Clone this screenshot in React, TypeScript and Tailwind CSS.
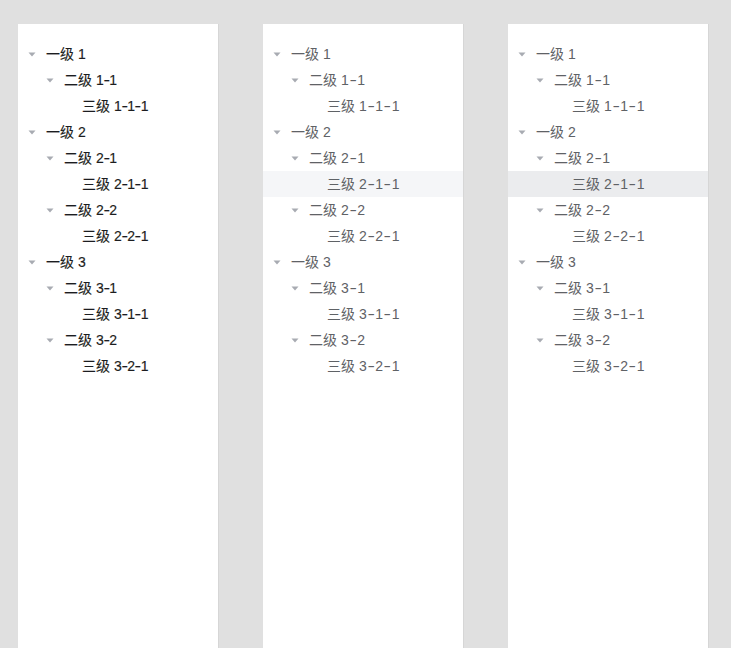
import React from 'react';

interface TreeNode {
  label: string;
  children?: TreeNode[];
}

const TREE: TreeNode[] = [
  {
    label: '一级 1',
    children: [{ label: '二级 1-1', children: [{ label: '三级 1-1-1' }] }],
  },
  {
    label: '一级 2',
    children: [
      { label: '二级 2-1', children: [{ label: '三级 2-1-1' }] },
      { label: '二级 2-2', children: [{ label: '三级 2-2-1' }] },
    ],
  },
  {
    label: '一级 3',
    children: [
      { label: '二级 3-1', children: [{ label: '三级 3-1-1' }] },
      { label: '二级 3-2', children: [{ label: '三级 3-2-1' }] },
    ],
  },
];

const INDENT = ['pl-0', 'pl-[18px]', 'pl-[36px]'];

function Caret() {
  return (
    <svg width="8" height="5" viewBox="0 0 8 5" className="block">
      <path d="M0.5 0.5 H7.5 L4 4.5 Z" fill="#a8abb2" />
    </svg>
  );
}

interface Variant {
  text: string;
  dash: string;
  highlight: string;
}

function Label({ text, dash }: { text: string; dash: string }) {
  const parts = text.split('-');
  return (
    <>
      {parts.map((p, i) => (
        <React.Fragment key={i}>
          {i > 0 && <span className={`inline-block ${dash}`}>-</span>}
          {p}
        </React.Fragment>
      ))}
    </>
  );
}

function Rows({
  nodes,
  level,
  variant,
}: {
  nodes: TreeNode[];
  level: number;
  variant: Variant;
}) {
  return (
    <>
      {nodes.map((n) => {
        const active = n.label === '三级 2-1-1';
        return (
          <React.Fragment key={n.label}>
            <div
              className={`flex h-[26px] items-center ${INDENT[level]} ${
                active ? variant.highlight : ''
              }`}
            >
              <span className="flex w-[28px] shrink-0 items-center justify-center pt-px">
                {n.children ? <Caret /> : null}
              </span>
              <span className={`text-[14px] leading-none whitespace-nowrap ${variant.text}`}>
                <Label text={n.label} dash={variant.dash} />
              </span>
            </div>
            {n.children && <Rows nodes={n.children} level={level + 1} variant={variant} />}
          </React.Fragment>
        );
      })}
    </>
  );
}

const VARIANTS: Variant[] = [
  {
    text: 'text-[#1c1d20] [-webkit-text-stroke:0.15px_#1c1d20]',
    dash: 'scale-x-[1.4] px-[0.5px]',
    highlight: '',
  },
  { text: 'text-[#5f6266]', dash: 'scale-x-[1.6] px-[2px]', highlight: 'bg-[#f5f6f8]' },
  { text: 'text-[#5f6266]', dash: 'scale-x-[1.6] px-[2px]', highlight: 'bg-[#ebecee]' },
];

export default function App() {
  return (
    <div
      className="flex h-[648px] gap-[45px] overflow-hidden bg-[#e0e0e0] pl-[18px] pt-[24px]"
      style={{ fontFamily: '"Helvetica Neue", "Liberation Sans", "Noto Sans CJK SC", sans-serif' }}
    >
      {VARIANTS.map((v, i) => (
        <div key={i} className="h-[700px] w-[200px] bg-white pt-[17px] shadow-[1px_0_0_#d6d6d6]">
          <Rows nodes={TREE} level={0} variant={v} />
        </div>
      ))}
    </div>
  );
}
